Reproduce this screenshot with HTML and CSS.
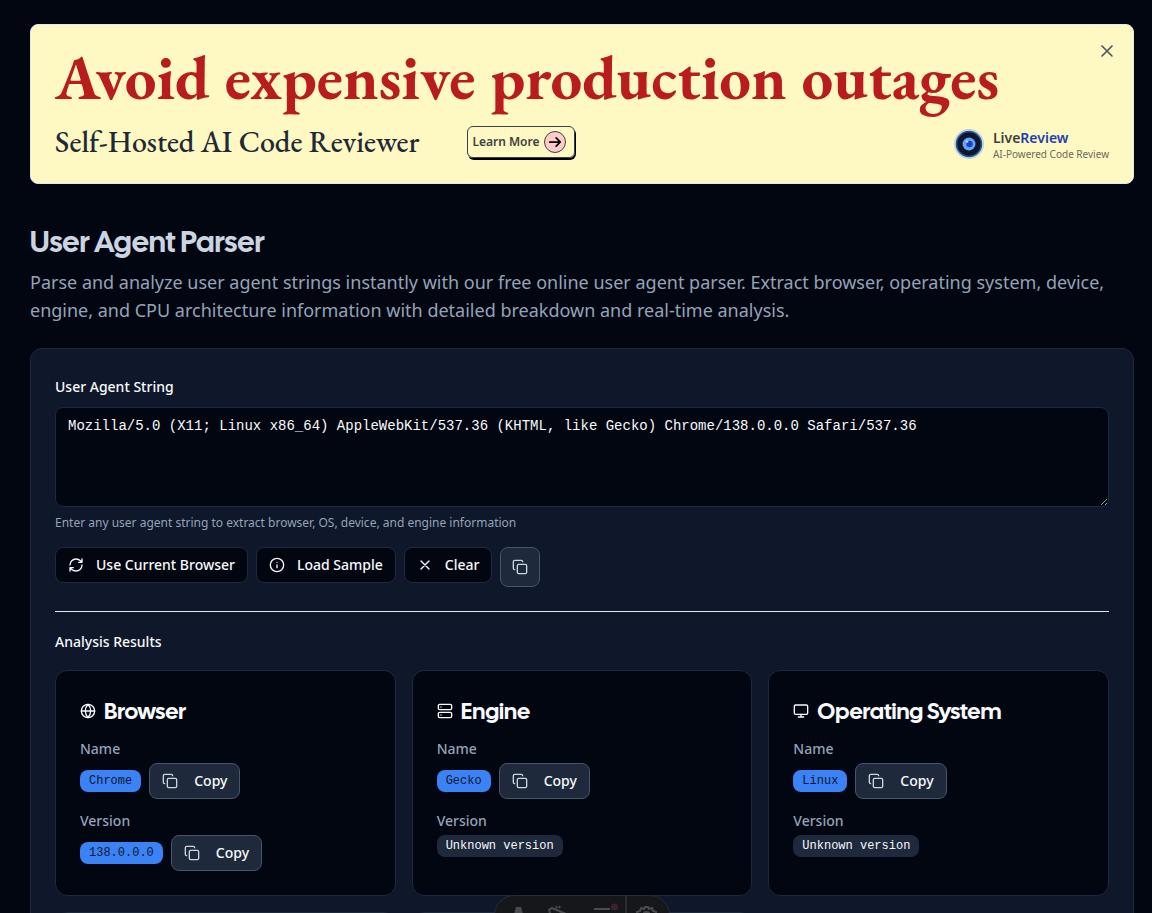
FILE: index.html
```html
<!DOCTYPE html>
<html lang="en">
<head>
<meta charset="utf-8">
<meta name="viewport" content="width=device-width, initial-scale=1">
<title>User Agent Parser</title>
<link rel="stylesheet" href="styles.css">
</head>
<body>
<svg class="sprite" aria-hidden="true">
  <symbol id="i-copy" viewBox="0 0 24 24"><rect x="8" y="8" width="14" height="14" rx="2"/><path d="M4 16c-1.100 0-2-.9-2-2V4c0-1.100.9-2 2-2h10c1.100 0 2 .9 2 2"/></symbol>
  <symbol id="i-x" viewBox="0 0 24 24"><path d="M18 6 6 18M6 6l12 12"/></symbol>
</svg>
<main class="page">
  <aside class="banner">
    <button class="banner-close" aria-label="Close"><svg class="icon icon-lg"><use href="#i-x"/></svg></button>
    <p class="banner-title">Avoid expensive production outages</p>
    <div class="banner-row">
      <div class="pitch">
        <p class="banner-sub">Self-Hosted AI Code Reviewer</p>
        <a class="learn" href="#learn">Learn More
          <span class="learn-dot"><svg class="icon" viewBox="0 0 24 24"><path d="M3 12h18M14 5l7 7-7 7"/></svg></span>
        </a>
      </div>
      <div class="brand">
        <svg class="brand-logo" viewBox="0 0 32 32" aria-hidden="true">
          <circle cx="16" cy="16" r="15" fill="#93b8e8" opacity=".55"/>
          <circle cx="16" cy="16" r="12.500" fill="#0f172a" stroke="#2457a8" stroke-width="1.500"/>
          <circle cx="16" cy="16" r="6.500" fill="#60a5fa"/>
          <circle cx="16.500" cy="16" r="3.200" fill="#1e40c8"/>
          <circle cx="14" cy="13.500" r="1.300" fill="#bfdbfe"/>
        </svg>
        <div class="brand-text">
          <div class="brand-name">Live<span>Review</span></div>
          <div class="brand-tag">AI-Powered Code Review</div>
        </div>
      </div>
    </div>
  </aside>

  <h1 class="title">User Agent Parser</h1>
  <p class="lead">Parse and analyze user agent strings instantly with our free online user agent parser. Extract browser, operating system, device, engine, and CPU architecture information with detailed breakdown and real-time analysis.</p>

  <section class="panel">
    <label class="label" for="ua">User Agent String</label>
    <textarea class="ua" id="ua" spellcheck="false">Mozilla/5.0 (X11; Linux x86_64) AppleWebKit/537.36 (KHTML, like Gecko) Chrome/138.0.0.0 Safari/537.36</textarea>
    <p class="hint">Enter any user agent string to extract browser, OS, device, and engine information</p>
    <div class="actions">
      <button class="btn"><svg class="icon" viewBox="0 0 24 24"><path d="M3 12a9 9 0 0 1 9-9 9.750 9.750 0 0 1 6.740 2.740L21 8M21 3v5h-5M21 12a9 9 0 0 1-9 9 9.750 9.750 0 0 1-6.740-2.740L3 16M8 16H3v5"/></svg>Use Current Browser</button>
      <button class="btn"><svg class="icon" viewBox="0 0 24 24"><circle cx="12" cy="12" r="10"/><path d="M12 16v-4M12 8h.01"/></svg>Load Sample</button>
      <button class="btn"><svg class="icon"><use href="#i-x"/></svg>Clear</button>
      <button class="btn copy copy-only" aria-label="Copy"><svg class="icon"><use href="#i-copy"/></svg></button>
    </div>
    <hr class="rule">
    <h2 class="label results-label">Analysis Results</h2>
    <div class="grid">
      <article class="card">
        <h3 class="card-title"><svg class="icon" viewBox="0 0 24 24"><circle cx="12" cy="12" r="10"/><path d="M12 2a14.500 14.500 0 0 0 0 20 14.500 14.500 0 0 0 0-20M2 12h20"/></svg>Browser</h3>
        <div class="field"><div class="field-name">Name</div><div class="value"><span class="badge">Chrome</span><button class="btn copy"><svg class="icon"><use href="#i-copy"/></svg>Copy</button></div></div>
        <div class="field"><div class="field-name">Version</div><div class="value"><span class="badge">138.0.0.0</span><button class="btn copy"><svg class="icon"><use href="#i-copy"/></svg>Copy</button></div></div>
      </article>
      <article class="card">
        <h3 class="card-title"><svg class="icon" viewBox="0 0 24 24"><rect x="2" y="2" width="20" height="8" rx="2"/><rect x="2" y="14" width="20" height="8" rx="2"/><path d="M6 6h.01M6 18h.01"/></svg>Engine</h3>
        <div class="field"><div class="field-name">Name</div><div class="value"><span class="badge">Gecko</span><button class="btn copy"><svg class="icon"><use href="#i-copy"/></svg>Copy</button></div></div>
        <div class="field"><div class="field-name">Version</div><div class="value"><span class="badge muted">Unknown version</span></div></div>
      </article>
      <article class="card">
        <h3 class="card-title"><svg class="icon" viewBox="0 0 24 24"><rect x="2" y="3" width="20" height="14" rx="2"/><path d="M8 21h8M12 17v4"/></svg>Operating System</h3>
        <div class="field"><div class="field-name">Name</div><div class="value"><span class="badge">Linux</span><button class="btn copy"><svg class="icon"><use href="#i-copy"/></svg>Copy</button></div></div>
        <div class="field"><div class="field-name">Version</div><div class="value"><span class="badge muted">Unknown version</span></div></div>
      </article>
      <article class="card"></article>
      <article class="card"></article>
    </div>
  </section>
</main>
<div class="devbar" aria-hidden="true">
  <svg viewBox="0 0 176 40" fill="none" stroke="#4a4b50" stroke-width="2">
    <path d="M17 25 21 11h5l4 14h-4l-2-5-3 5z" fill="#4a4b50" stroke="none"/>
    <path d="M57 12l14 6-9 3-3 9-5-16zM61 10l1 2M65 10l-1 2"/>
    <path d="M99 13h16M99 20h16"/>
    <circle cx="119.500" cy="11" r="3.500" fill="#3d202d" stroke="none"/>
    <path d="M131 0v40" stroke="#34353a" stroke-width="1.500"/>
    <path d="M142 20v-4l3-1 1-3 3 1 1-2h3l1 2 3-1 1 3 3 1v4"/>
    <circle cx="151.500" cy="19" r="3"/>
  </svg>
</div>
</body>
</html>
```
FILE: styles.css
```css
* { box-sizing: border-box; margin: 0; padding: 0; }

body {
  background: #020611;
  color: #f8fafc;
  font-family: "Noto Sans", sans-serif;
  font-size: 14px;
  line-height: 20px;
}

button, textarea { font: inherit; color: inherit; }

.sprite { position: absolute; width: 0; height: 0; }

.icon {
  width: 16px;
  height: 16px;
  flex: none;
  fill: none;
  stroke: currentColor;
  stroke-width: 2;
  stroke-linecap: round;
  stroke-linejoin: round;
}

.icon-lg { width: 20px; height: 20px; }

.page {
  height: 100vh;
  overflow: hidden;
  padding: 24px 18px 0 30px;
}

.banner {
  position: relative;
  padding: 24px 24px 22px;
  border: 1px solid #e2e8f0;
  border-radius: 8px;
  background: #fef8c3;
}

.banner-close {
  position: absolute;
  top: 16px;
  right: 16px;
  display: flex;
  border: 0;
  background: none;
  color: #4b5563;
}

.banner-title {
  color: #b91c1c;
  font: 700 63px/56px "EB Garamond", "Liberation Serif", serif;
  white-space: nowrap;
}

.banner-row {
  display: flex;
  align-items: flex-start;
  min-height: 36px;
  margin-top: 20px;
}

.pitch {
  display: flex;
  align-items: center;
  gap: 48px;
}

.banner-sub {
  color: #1f2937;
  font: 500 30px/34px "EB Garamond", "Liberation Serif", serif;
}

.learn {
  display: flex;
  align-items: center;
  gap: 4px;
  padding: 4px 8px 4px 4px;
  border: 1px solid #374151;
  border-radius: 6px;
  box-shadow: 1px 2px 0 #000;
  color: #404040;
  font-size: 12px;
  font-weight: 600;
  text-decoration: none;
}

.learn-dot {
  display: grid;
  place-items: center;
  width: 22px;
  height: 22px;
  border: 1px solid #404040;
  border-radius: 50%;
  background: #fecaca;
  color: #000;
}

.learn-dot .icon { width: 14px; height: 14px; stroke-width: 3; }

.brand {
  display: flex;
  align-items: center;
  align-self: flex-end;
  gap: 8px;
  margin-left: auto;
}

.brand-logo { width: 32px; height: 32px; }

.brand-text { padding-top: 2px; }

.brand-name {
  color: #404040;
  font-weight: 600;
  line-height: 18px;
}

.brand-name span { color: #1e40af; }

.brand-tag {
  color: #6b6b5c;
  font-size: 10px;
  line-height: 14px;
}

.title {
  margin-top: 40px;
  color: #cbd5e1;
  font: 500 30px/36px "Cal Sans", Lato, sans-serif;
}

.lead {
  margin-top: 8px;
  color: #94a3b8;
  font-size: 18px;
  line-height: 28px;
}

.panel {
  margin-top: 24px;
  padding: 24px;
  border: 1px solid #1e293b;
  border-radius: 12px;
  background: #0f172a;
}

.label {
  display: block;
  font-size: 14px;
  font-weight: 500;
  line-height: 28px;
}

.ua {
  display: block;
  width: 100%;
  height: 100px;
  margin-top: 6px;
  padding: 8px 12px;
  border: 1px solid #1e293b;
  border-radius: 8px;
  outline: 0;
  background: #020611;
  font-family: "Liberation Mono", monospace;
  resize: vertical;
}

.hint {
  margin-top: 8px;
  color: #94a3b8;
  font-size: 12px;
  line-height: 16px;
}

.actions {
  display: flex;
  align-items: flex-start;
  gap: 8px;
  margin-top: 16px;
}

.btn {
  display: inline-flex;
  align-items: center;
  gap: 12px;
  height: 36px;
  padding: 0 12px;
  border: 1px solid #1e293b;
  border-radius: 8px;
  background: #020611;
  font-weight: 500;
  white-space: nowrap;
}

.copy {
  gap: 16px;
  border-color: #475569;
  background: #1e293b;
}

.copy .icon { color: #cbd5e1; }

.copy-only {
  justify-content: center;
  width: 40px;
  height: 40px;
}

.rule {
  height: 1px;
  margin-top: 24px;
  border: 0;
  background: #e2e8f0;
}

.results-label { margin-top: 16px; }

.grid {
  display: grid;
  grid-template-columns: repeat(3, 1fr);
  gap: 16px;
  margin-top: 14px;
}

.card {
  display: flex;
  flex-direction: column;
  gap: 12px;
  min-height: 226px;
  padding: 24px;
  border: 1px solid #1e293b;
  border-radius: 12px;
  background: #020611;
}

.card-title {
  display: flex;
  align-items: center;
  gap: 8px;
  font: 500 23px/32px "Cal Sans", Lato, sans-serif;
}

.field-name {
  margin-bottom: 4px;
  color: #94a3b8;
  font-weight: 500;
}

.value {
  display: flex;
  align-items: center;
  gap: 8px;
}

.badge {
  padding: 2px 8px;
  border: 1px solid transparent;
  border-radius: 8px;
  background: #3b82f6;
  color: #0f172a;
  font: 12px/16px "Liberation Mono", monospace;
}

.muted {
  background: #1e293b;
  color: #f8fafc;
}

.devbar {
  position: fixed;
  bottom: -22px;
  left: 50%;
  width: 176px;
  height: 40px;
  margin-left: -82px;
  overflow: hidden;
  border: 1px solid #2c2d32;
  border-radius: 20px;
  background: #16171b;
}

.devbar svg { display: block; width: 176px; height: 40px; }
```
